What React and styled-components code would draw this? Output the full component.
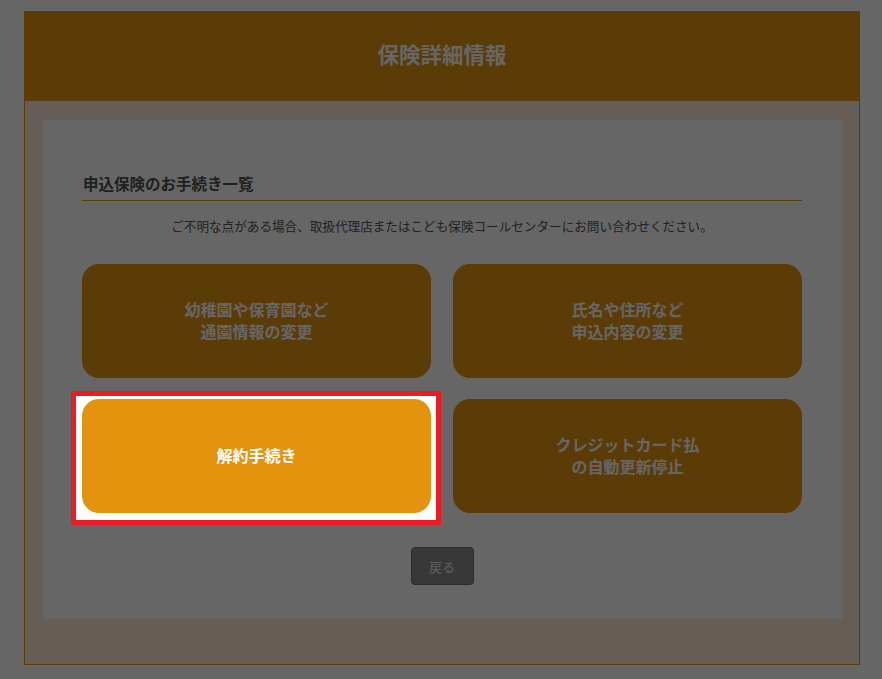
import React from 'react';
import styled, { createGlobalStyle } from 'styled-components';

const GlobalStyle = createGlobalStyle`
  body {
    margin: 0;
    background: #ffffff;
    font-family: "Noto Sans CJK JP", "Noto Sans", sans-serif;
  }
`;

const Frame = styled.div`
  box-sizing: border-box;
  width: 836px;
  margin: 11px 0 0 24px;
  border: 1px solid #e4930f;
`;

const Header = styled.header`
  box-sizing: border-box;
  height: 89px;
  padding-bottom: 6px;
  background: #e4930f;
  display: flex;
  align-items: center;
  justify-content: center;
`;

const Title = styled.h1`
  margin: 0;
  font-size: 21.5px;
  font-weight: 700;
  color: #ffffff;
`;

const Body = styled.div`
  background: #ffe8d9;
  padding: 19px 17px 45px 18px;
`;

const Panel = styled.section`
  background: #ffffff;
  padding: 51px 40px 34px 39px;
  display: flex;
  flex-direction: column;
  align-items: stretch;
`;

const Heading = styled.h2`
  margin: 0;
  padding: 0 0 5px 1px;
  font-size: 15.5px;
  line-height: 24px;
  font-weight: 700;
  color: #505050;
  border-bottom: 1px solid #e4930f;
`;

const Note = styled.p`
  margin: 15px 0 0;
  font-size: 12.6px;
  line-height: 20px;
  color: #555555;
  text-align: center;
`;

const Grid = styled.div`
  margin-top: 28px;
  display: grid;
  grid-template-columns: 349px 349px;
  grid-auto-rows: 114px;
  column-gap: 22px;
  row-gap: 21px;
`;

const Card = styled.button`
  box-sizing: border-box;
  border: none;
  border-radius: 17px;
  background: #e4930f;
  color: #ffffff;
  font-family: inherit;
  font-size: 16px;
  line-height: 22px;
  font-weight: 700;
  text-align: center;
  cursor: pointer;
  width: 100%;
  height: 100%;
  padding: 0 0 3px;
`;

const Spotlight = styled.div`
  position: relative;
  z-index: 2;

  &::before {
    content: '';
    position: absolute;
    top: -8px;
    left: -11px;
    right: -10px;
    bottom: -12px;
    border: 5px solid #ed1c24;
    background: #ffffff;
    z-index: -1;
  }
`;

const Footer = styled.div`
  margin-top: 34px;
  display: flex;
  justify-content: center;
`;

const BackButton = styled.button`
  width: 63px;
  height: 38px;
  border: 1px solid #6c6c6c;
  border-radius: 4px;
  background: #8c8c8c;
  color: #eeeeee;
  font-family: inherit;
  font-size: 13px;
  cursor: pointer;
`;

const Overlay = styled.div`
  position: fixed;
  inset: 0;
  background: rgba(0, 0, 0, 0.6);
  z-index: 1;
`;

const menu = [
  { label: ['幼稚園や保育園など', '通園情報の変更'] },
  { label: ['氏名や住所など', '申込内容の変更'] },
  { label: ['解約手続き'], active: true },
  { label: ['クレジットカード払', 'の自動更新停止'] },
];

const CardLabel = ({ lines }) =>
  lines.map((line, i) => (
    <React.Fragment key={i}>
      {i > 0 && <br />}
      {line}
    </React.Fragment>
  ));

const App = () => (
  <>
    <GlobalStyle />
    <Frame>
      <Header>
        <Title>保険詳細情報</Title>
      </Header>
      <Body>
        <Panel>
          <Heading>申込保険のお手続き一覧</Heading>
          <Note>ご不明な点がある場合、取扱代理店またはこども保険コールセンターにお問い合わせください。</Note>
          <Grid>
            {menu.map((item, i) =>
              item.active ? (
                <Spotlight key={i}>
                  <Card>
                    <CardLabel lines={item.label} />
                  </Card>
                </Spotlight>
              ) : (
                <Card key={i}>
                  <CardLabel lines={item.label} />
                </Card>
              )
            )}
          </Grid>
          <Footer>
            <BackButton>戻る</BackButton>
          </Footer>
        </Panel>
      </Body>
    </Frame>
    <Overlay />
  </>
);

export default App;
